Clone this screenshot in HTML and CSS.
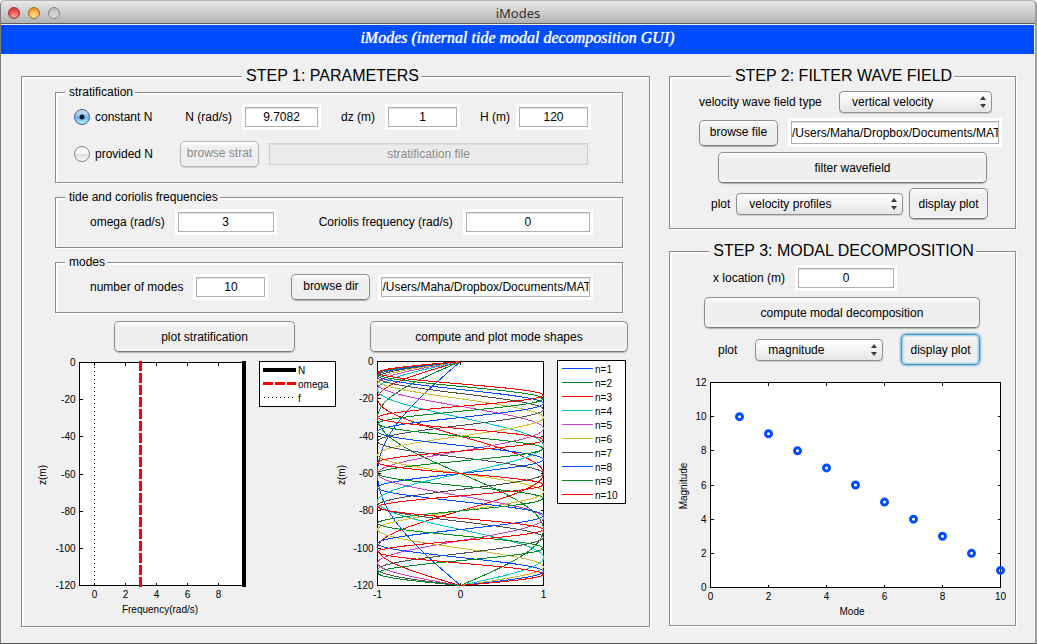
FILE: index.html
```html
<!DOCTYPE html>
<html lang="en">

<head>
    <meta charset="utf-8">
    <title>iModes</title>
    <link rel="stylesheet" href="styles.css">
</head>

<body>
    <div class="window">
        <header class="titlebar">
            <div class="lights">
                <span class="light red"></span>
                <span class="light amber"></span>
                <span class="light grey"></span>
            </div>
            <span class="title">iModes</span>
        </header>
        <h1 class="banner">iModes (internal tide modal decomposition GUI)</h1>
        <main class="main">
            <fieldset class="panel params">
                <legend>STEP 1: PARAMETERS</legend>

                <fieldset class="group strat">
                    <legend>stratification</legend>
                    <div class="row">
                        <label class="choice"><input type="radio" name="strat" checked>constant N</label>
                        <label class="field" for="N">N (rad/s)</label>
                        <input class="edit w-n" id="N" type="text" value="9.7082">
                        <label class="field far" for="dz">dz (m)</label>
                        <input class="edit w-s" id="dz" type="text" value="1">
                        <label class="field far" for="H">H (m)</label>
                        <input class="edit w-s tight" id="H" type="text" value="120">
                    </div>
                    <div class="row">
                        <label class="choice"><input type="radio" name="strat">provided N</label>
                        <button class="btn small" type="button" disabled>browse strat</button>
                        <input class="edit grow" type="text" value="stratification file" aria-label="stratification file" disabled>
                    </div>
                </fieldset>

                <fieldset class="group tide">
                    <legend>tide and coriolis frequencies</legend>
                    <div class="row">
                        <label for="omega">omega (rad/s)</label>
                        <input class="edit w-l" id="omega" type="text" value="3">
                        <label class="coriolis" for="f">Coriolis frequency (rad/s)</label>
                        <input class="edit grow" id="f" type="text" value="0">
                    </div>
                </fieldset>

                <fieldset class="group modes">
                    <legend>modes</legend>
                    <div class="row">
                        <label for="nmodes">number of modes</label>
                        <input class="edit w-s" id="nmodes" type="text" value="10">
                        <button class="btn small dir" type="button">browse dir</button>
                        <input class="edit path grow" type="text" value="/Users/Maha/Dropbox/Documents/MATLAB" aria-label="modes directory">
                    </div>
                </fieldset>

                <div class="actions">
                    <button class="btn plot-strat" type="button">plot stratification</button>
                    <button class="btn plot-modes" type="button">compute and plot mode shapes</button>
                </div>
                <div class="plots">
                    <svg id="stratPlot" width="303" height="274" viewBox="34 352 303 274"></svg>
                    <svg id="modePlot" width="292" height="274" viewBox="337 352 292 274"></svg>
                </div>
            </fieldset>

            <div class="side">
                <fieldset class="panel filter">
                    <legend>STEP 2: FILTER WAVE FIELD</legend>
                    <div class="row r-type">
                        <label for="type">velocity wave field type</label>
                        <span class="popup w-type">
                            <select id="type"><option>vertical velocity</option><option>horizontal velocity</option></select>
                            <svg width="6" height="12" viewBox="0 0 6 12"><path d="M3 0L6 4H0zM0 8H6L3 12z" /></svg>
                        </span>
                    </div>
                    <div class="row r-file">
                        <button class="btn small" type="button">browse file</button>
                        <input class="edit path tall grow" type="text" value="/Users/Maha/Dropbox/Documents/MATLAB" aria-label="wave field file">
                    </div>
                    <div class="row r-filter">
                        <button class="btn grow" type="button">filter wavefield</button>
                    </div>
                    <div class="row r-plot">
                        <label for="what">plot</label>
                        <span class="popup grow">
                            <select id="what"><option>velocity profiles</option></select>
                            <svg width="6" height="12" viewBox="0 0 6 12"><path d="M3 0L6 4H0zM0 8H6L3 12z" /></svg>
                        </span>
                        <button class="btn display" type="button">display plot</button>
                    </div>
                </fieldset>

                <fieldset class="panel decomp">
                    <legend>STEP 3: MODAL DECOMPOSITION</legend>
                    <div class="row r-loc">
                        <label for="xloc">x location (m)</label>
                        <input class="edit w-l" id="xloc" type="text" value="0">
                    </div>
                    <div class="row r-compute">
                        <button class="btn grow" type="button">compute modal decomposition</button>
                    </div>
                    <div class="row r-mag">
                        <label for="quantity">plot</label>
                        <span class="popup grow">
                            <select id="quantity"><option>magnitude</option><option>phase</option></select>
                            <svg width="6" height="12" viewBox="0 0 6 12"><path d="M3 0L6 4H0zM0 8H6L3 12z" /></svg>
                        </span>
                        <button class="btn display active" type="button">display plot</button>
                    </div>
                    <svg id="magPlot" class="mag" width="345" height="260" viewBox="670 366 345 260"></svg>
                </fieldset>
            </div>
        </main>
    </div>
    <script src="plots.js"></script>
</body>

</html>
```
FILE: styles.css
```css
* {
    box-sizing: border-box;
}

body {
    margin: 0;
    background: #fff;
    font: 12px/14px "Liberation Sans", Arial, sans-serif;
    color: #000;
}

.window {
    min-height: 100vh;
    background: #f0f0f0;
    border: solid #7d7d7d;
    border-width: 0 2px 1px 1px;
    border-right-color: #a0a0a0;
    border-bottom-color: #555;
    border-radius: 5px 5px 0 0;
}

.titlebar {
    display: grid;
    grid-template-columns: 1fr auto 1fr;
    align-items: center;
    height: 24px;
    margin-bottom: 1px;
    padding: 2px 7px 0;
    background: linear-gradient(#e9e9e9, #b2b2b2);
    border-top: 1px solid #b5b5b5;
    border-bottom: 1px solid #5c5c5c;
    border-radius: 5px 5px 0 0;
}

.lights {
    display: flex;
    gap: 8px;
}

.light {
    width: 12px;
    height: 12px;
    border: 1px solid #777;
    border-radius: 50%;
}

.red {
    background: radial-gradient(circle at 50% 85%, #ffa9a2, #ec4b48 60%, #c33);
    border-color: #9b3534;
}

.amber {
    background: radial-gradient(circle at 50% 85%, #ffe9a0, #f5ac45 60%, #cf8126);
    border-color: #a06c26;
}

.grey {
    background: linear-gradient(#bbb, #ddd);
    border-color: #858585;
}

.title {
    font: 13px/18px "Noto Sans", sans-serif;
    color: #333;
}

.banner {
    height: 29px;
    margin: 0 1px 0 0;
    padding-top: 4px;
    background: #004dff;
    color: #fff;
    font: italic 16px/18px "Liberation Serif", serif;
    text-align: center;
    text-shadow: 0 0 1px #fff;
}

.main {
    display: grid;
    grid-template-columns: 629fr 347fr;
    gap: 19px;
    padding: 13px 19px 16px 20px;
}

.side {
    display: flex;
    flex-direction: column;
    gap: 13px;
}

fieldset {
    min-width: 0;
    margin: 0;
    padding: 0;
    border: 1px solid #8c8c8c;
    box-shadow: 1px 1px 0 #fff, inset 2px 2px 0 #fff;
}

legend {
    padding: 0 2px 0 4px;
    background: #f0f0f0;
}

.panel > legend {
    margin: 0 auto;
    font-size: 16px;
    line-height: 18px;
}

.params {
    padding: 0 20px 0 12px;
}

.group {
    margin: 0 6px 7px 21px;
    padding: 5px 31px 12px 18px;
}

.group > legend {
    margin-left: -9px;
    height: 14px;
}

.strat {
    padding-bottom: 14px;
}

.tide,
.modes {
    padding: 5px 29px 12px 34px;
}

.tide > legend,
.modes > legend {
    margin-left: -25px;
}

.row {
    display: flex;
    align-items: center;
}

.row + .row {
    margin-top: 10px;
}

.side .row + .row {
    margin-top: 5px;
}

.decomp .row + .row {
    margin-top: 6px;
}

.grow {
    flex: 1;
    min-width: 0;
}

label {
    white-space: nowrap;
}

.choice {
    display: flex;
    align-items: center;
    gap: 5px;
    width: 106px;
}

.choice input {
    appearance: none;
    width: 16px;
    height: 16px;
    margin: 0;
    border: 1px solid #858585;
    border-radius: 50%;
    background: linear-gradient(#fff, #f4f4f4 50%, #dcdcdc 55%, #fff);
}

.choice input:checked {
    border-color: #3d5f93;
    background: radial-gradient(circle, #0a1c33 2px, transparent 3px), linear-gradient(#cfe3f5, #86bdeb 50%, #6fb4ec 55%, #b9f2ff);
}

.field {
    margin-left: 7px;
}

.far {
    margin-left: 20px;
}

.edit {
    height: 26px;
    margin-left: 10px;
    padding: 0 2px;
    border: 3px solid #fff;
    background: #fff;
    box-shadow: inset 0 0 0 1px #b0b0b0, inset 0 1px 0 #8e8e8e, inset 0 2px 1px #ddd;
    color: #000;
    font: inherit;
    text-align: center;
}

.edit:disabled {
    height: 28px;
    border-color: #eee;
    background: #ebebeb;
    box-shadow: inset 0 0 0 1px #cfcfcf, inset 0 2px 1px #ddd;
    color: #8b8b8b;
}

.edit.path {
    padding: 0 1px;
    text-align: left;
}

.edit.tall {
    height: 29px;
}

.w-n {
    width: 79px;
}

.w-s {
    width: 75px;
}

.w-l {
    width: 102px;
}

.tight {
    margin-left: 6px;
}

.btn {
    height: 31px;
    padding: 0;
    border: 1px solid #8f8f8f;
    border-bottom-color: #777;
    border-radius: 5px;
    background: linear-gradient(#fff, #efefef 5px, #efefef 26px, #fafafa);
    box-shadow: 0 1px 1px #b0b0b0;
    color: #000;
    font: inherit;
}

.btn:disabled {
    border-color: #b5b5b5;
    box-shadow: 0 1px 1px #ccc;
    color: #8b8b8b;
}

.small {
    width: 79px;
    height: 26px;
    padding-bottom: 2px;
}

.strat .small {
    margin-right: -3px;
}

.dir {
    margin-left: 23px;
}

.modes .edit.path {
    margin-left: 8px;
}

.coriolis {
    margin-left: 42px;
}

.display {
    width: 79px;
}

.active,
.active:focus {
    outline: none;
    border-color: #4c92bb;
    box-shadow: 0 0 2px 1px #74b7de, inset 0 0 2px 1px #8fc6e6;
}

.popup {
    position: relative;
}

.popup select {
    display: block;
    appearance: none;
    width: 100%;
    height: 22px;
    padding: 0 20px 0 12px;
    border: 1px solid #8f8f8f;
    border-radius: 4px;
    background: linear-gradient(#fff, #f3f3f3 50%, #e4e4e4);
    box-shadow: 0 1px 1px #ccc;
    color: #000;
    font: inherit;
}

.popup svg {
    position: absolute;
    top: 5px;
    right: 6px;
    fill: #3c3c3c;
    pointer-events: none;
}

.actions {
    display: flex;
    justify-content: space-between;
    padding: 1px 1px 0 80px;
}

.plot-strat {
    width: 181px;
}

.plot-modes {
    width: 258px;
}

.plots {
    display: flex;
    justify-content: space-between;
}

.filter {
    padding: 6px 0 9px;
}

.r-type {
    justify-content: space-between;
    padding: 0 23px 0 29px;
}

.w-type {
    width: 153px;
}

.r-file {
    padding: 0 13px 0 29px;
}

.r-filter {
    padding: 0 28px 0 48px;
}

.r-plot {
    gap: 6px;
    padding: 0 27px 0 41px;
}

.decomp {
    padding-top: 5px;
}

.r-loc {
    padding-left: 43px;
}

.r-compute {
    padding: 0 35px 0 34px;
}

.r-mag {
    gap: 18px;
    padding: 0 35px 0 48px;
}

.mag {
    display: block;
    margin: 0 auto;
}

/* plots */
.plots svg,
.mag {
    overflow: visible;
    font-size: 10px;
}

.box {
    fill: #fff;
    stroke: #000;
    shape-rendering: crispEdges;
}

.line {
    fill: none;
    stroke: #000;
    shape-rendering: crispEdges;
}

.freq-n {
    stroke-width: 4;
}

.freq-omega {
    stroke: #f00;
    stroke-width: 3;
    stroke-dasharray: 10 2;
}

.freq-f {
    stroke-dasharray: 1 3;
}

.marker {
    fill: none;
    stroke: #004dff;
    stroke-width: 3;
}
```
FILE: plots.js
```js
var NS = "http://www.w3.org/2000/svg";
var colors = ["#004dff", "#008a20", "#ff0000", "#00c8c8", "#d040c8", "#ccc030", "#505050"];

function add(svg, tag, attrs, text) {
    var el = document.createElementNS(NS, tag);
    for (var key in attrs) el.setAttribute(key, attrs[key]);
    if (text !== undefined) el.textContent = text;
    svg.appendChild(el);
    return el;
}

function line(svg, points, cls) {
    return add(svg, "polyline", { points: points.join(" "), "class": "line " + (cls || "") });
}

// a = {x, y, w, h, x0, x1, y0, y1, xt, yt}; returns scales from data to pixels
function axes(svg, a) {
    function sx(v) { return a.x + (v - a.x0) / (a.x1 - a.x0) * a.w; }
    function sy(v) { return a.y + (a.y1 - v) / (a.y1 - a.y0) * a.h; }
    add(svg, "rect", { x: a.x, y: a.y, width: a.w, height: a.h, "class": "box" });
    a.xt.forEach(function (v) {
        var x = Math.floor(sx(v)) + 0.5;
        line(svg, [x, a.y, x, a.y + 3]);
        line(svg, [x, a.y + a.h - 3, x, a.y + a.h]);
        add(svg, "text", { x: x, y: a.y + a.h + 12, "text-anchor": "middle" }, v);
    });
    a.yt.forEach(function (v) {
        var y = Math.floor(sy(v)) + 0.5;
        line(svg, [a.x, y, a.x + 3, y]);
        line(svg, [a.x + a.w - 3, y, a.x + a.w, y]);
        add(svg, "text", { x: a.x - 4, y: y + 3, "text-anchor": "end" }, v);
    });
    return { x: sx, y: sy };
}

function ylabel(svg, x, y, text) {
    add(svg, "text", { "text-anchor": "middle", transform: "translate(" + x + " " + y + ") rotate(-90)" }, text);
}

var depths = [0, -20, -40, -60, -80, -100, -120];

// stratification
var svg = document.getElementById("stratPlot");
var s = axes(svg, { x: 79.5, y: 362.5, w: 165, h: 223, x0: -0.97, x1: 9.7082, y0: -120, y1: 0, xt: [0, 2, 4, 6, 8], yt: depths });
line(svg, [94.5, 363, 94.5, 585], "freq-f");
line(svg, [140.5, 361, 140.5, 587], "freq-omega");
line(svg, [244, 361, 244, 587], "freq-n");
add(svg, "text", { x: 160, y: 613, "text-anchor": "middle" }, "Frequency(rad/s)");
ylabel(svg, 46, 475, "z(m)");
add(svg, "rect", { x: 259.5, y: 361.5, width: 76, height: 45, "class": "box" });
line(svg, [263, 370, 296, 370], "freq-n");
line(svg, [263, 383.5, 296, 383.5], "freq-omega");
line(svg, [264, 397.5, 296, 397.5], "freq-f");
["N", "omega", "f"].forEach(function (name, i) {
    add(svg, "text", { x: 298, y: 374 + i * 14 }, name);
});

// mode shapes, one sample per metre
svg = document.getElementById("modePlot");
s = axes(svg, { x: 377.5, y: 361.5, w: 166, h: 224, x0: -1, x1: 1, y0: -120, y1: 0, xt: [-1, 0, 1], yt: depths });
ylabel(svg, 345, 475, "z(m)");
add(svg, "rect", { x: 557.5, y: 360.5, width: 68, height: 143, "class": "box" });
for (var n = 1; n <= 10; n++) {
    var pts = [];
    for (var z = 0; z <= 120; z++) {
        pts.push(s.x(-Math.sin(n * Math.PI * z / 120)).toFixed(2), s.y(-z).toFixed(2));
    }
    var color = colors[(n - 1) % 7];
    line(svg, pts).style.stroke = color;
    var y = 354.5 + n * 14;
    line(svg, [562, y, 593, y]).style.stroke = color;
    add(svg, "text", { x: 595, y: y + 4 }, "n=" + n);
}

// magnitude of each mode
svg = document.getElementById("magPlot");
s = axes(svg, { x: 710.5, y: 383.5, w: 290, h: 205, x0: 0, x1: 10, y0: 0, y1: 12, xt: [0, 2, 4, 6, 8, 10], yt: [0, 2, 4, 6, 8, 10, 12] });
for (var m = 1; m <= 10; m++) {
    add(svg, "circle", { cx: s.x(m), cy: s.y(11 - m), r: 3, "class": "marker" });
}
add(svg, "text", { x: 852, y: 616, "text-anchor": "middle" }, "Mode");
ylabel(svg, 687, 487, "Magnitude");
```
